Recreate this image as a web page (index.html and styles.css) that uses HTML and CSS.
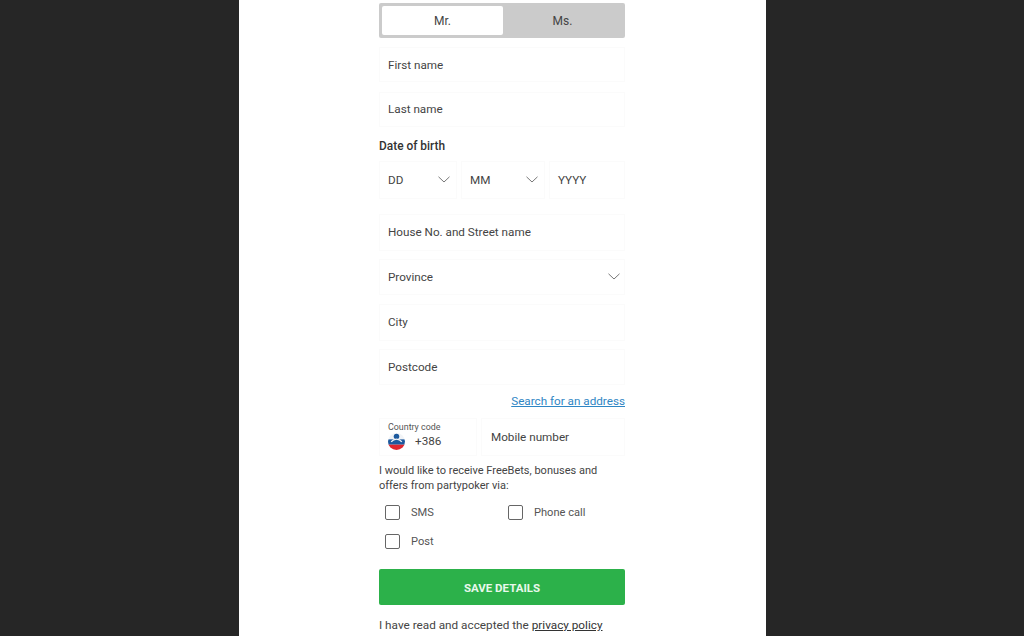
FILE: index.html
```html
<!DOCTYPE html>
<html lang="en">
<head>
  <meta charset="UTF-8" />
  <title>Personal details</title>
  <link rel="stylesheet" href="styles.css">
</head>
<body>
  <div class="panel">
    <form class="form">
      <div class="toggle">
        <div class="toggle-item selected">Mr.</div>
        <div class="toggle-item">Ms.</div>
      </div>

      <div class="field first">First name</div>
      <div class="field last">Last name</div>

      <div class="dob-label">Date of birth</div>
      <div class="dob">
        <div class="field dd">DD
          <svg class="chevron" viewBox="0 0 12 7"><path d="M.5.8 6 6 11.5.8" /></svg>
        </div>
        <div class="field mm">MM
          <svg class="chevron" viewBox="0 0 12 7"><path d="M.5.8 6 6 11.5.8" /></svg>
        </div>
        <div class="field yyyy">YYYY</div>
      </div>

      <div class="field street">House No. and Street name</div>
      <div class="field province">Province
        <svg class="chevron" viewBox="0 0 12 7"><path d="M.5.8 6 6 11.5.8" /></svg>
      </div>
      <div class="field city">City</div>
      <div class="field postcode">Postcode</div>

      <div class="search-row"><a href="#">Search for an address</a></div>

      <div class="phone">
        <div class="field country">
          <span class="country-label">Country code</span>
          <div class="country-value">
            <svg class="flag" viewBox="0 0 16 16">
              <defs><clipPath id="flagClip"><circle cx="8" cy="8" r="8" /></clipPath></defs>
              <g clip-path="url(#flagClip)">
                <rect width="16" height="7" fill="#f2f4f7" />
                <rect y="6" width="16" height="5" fill="#1d5a9e" />
                <rect y="11" width="16" height="5" fill="#e0262e" />
                <circle cx="8" cy="3.4" r="2.6" fill="#1d5a9e" />
                <path d="M3 8.4c1.6-2 3.4-2.6 5-2.6s3.4.6 5 2.6" fill="none" stroke="#f2f4f7" stroke-width="1.2" />
              </g>
            </svg>
            <span class="dial">+386</span>
          </div>
        </div>
        <div class="field mobile">Mobile number</div>
      </div>

      <p class="offers">I would like to receive FreeBets, bonuses and offers from partypoker via:</p>

      <div class="checks">
        <label class="check"><span class="box"></span>SMS</label>
        <label class="check"><span class="box"></span>Phone call</label>
        <label class="check"><span class="box"></span>Post</label>
      </div>

      <button type="button" class="save">SAVE DETAILS</button>

      <p class="privacy">I have read and accepted the <a href="#">privacy policy</a></p>
    </form>
  </div>
</body>
</html>
```

FILE: styles.css
```css
html, body {
  height: 100%;
}
body {
  margin: 0;
  background-color: #262626;
  font-family: Roboto, "Liberation Sans", sans-serif;
  color: #3b3b3b;
  overflow: hidden;
}
.panel {
  width: 527px;
  height: 636px;
  margin-left: 239px;
  background: white;
  overflow: hidden;
}
.form {
  width: 246px;
  margin-left: 140px;
  padding-top: 3px;
}
.toggle {
  display: flex;
  height: 35px;
  padding: 3px;
  box-sizing: border-box;
  background: #cbcbcb;
  border-radius: 2px;
}
.toggle-item {
  flex: 1;
  display: flex;
  align-items: center;
  justify-content: center;
  font-size: 12px;
  color: #444;
}
.toggle-item.selected {
  flex: 0 0 121px;
  background: white;
  border-radius: 2px;
}
.field {
  display: flex;
  align-items: center;
  box-sizing: border-box;
  padding-left: 8px;
  border: 1px solid #fbfbfb;
  font-size: 11.7px;
  color: #444;
  position: relative;
}
.first { height: 35px; margin-top: 9px; }
.last { height: 35px; margin-top: 10px; padding-bottom: 1px; }
.dob-label {
  margin-top: 11px;
  height: 16px;
  line-height: 16px;
  font-size: 11.9px;
  font-weight: 500;
  color: #333;
}
.dob {
  display: flex;
  gap: 4px;
  margin-top: 7px;
}
.dob .field { height: 38px; }
.dd { width: 78px; }
.mm { width: 84px; }
.yyyy { flex: 1; }
.chevron {
  position: absolute;
  right: 6px;
  top: 50%;
  width: 12px;
  height: 7px;
  margin-top: -4px;
  fill: none;
  stroke: #777;
  stroke-width: 1;
}
.province .chevron { right: 4px; }
.street { height: 37px; margin-top: 15px; padding-bottom: 1px; }
.province { height: 36px; margin-top: 8px; }
.city { height: 37px; margin-top: 9px; padding-bottom: 1px; }
.postcode { height: 36px; margin-top: 8px; padding-bottom: 1px; }
.search-row {
  margin-top: 9px;
  height: 15px;
  line-height: 15px;
  text-align: right;
  font-size: 11.7px;
}
.search-row a {
  color: #2f86c4;
}
.phone {
  display: flex;
  gap: 4px;
  margin-top: 9px;
}
.phone .field { height: 38px; }
.country {
  width: 98px;
  flex-direction: column;
  align-items: flex-start;
  padding-top: 3px;
}
.country-label {
  font-size: 8.9px;
  line-height: 11px;
  color: #555;
}
.country-value {
  display: flex;
  align-items: center;
  gap: 10px;
  height: 17px;
  font-size: 11.7px;
}
.dial {
  margin-bottom: 2px;
}
.flag {
  width: 17px;
  height: 17px;
}
.mobile {
  flex: 1;
  padding-left: 9px;
}
.offers {
  margin: 7px 0 0;
  font-size: 11px;
  line-height: 15px;
  color: #444;
}
.checks {
  display: grid;
  grid-template-columns: 123px 1fr;
  row-gap: 13px;
  margin-top: 11px;
  padding-left: 6px;
}
.check {
  display: flex;
  align-items: center;
  gap: 11px;
  height: 16px;
  font-size: 11.1px;
  color: #555;
}
.box {
  width: 13px;
  height: 13px;
  border: 1.5px solid #666;
  border-radius: 2px;
}
.save {
  display: block;
  width: 100%;
  height: 36px;
  margin-top: 20px;
  padding-top: 2px;
  border: none;
  border-radius: 2px;
  background-color: #2cb14a;
  color: #e9f8ec;
  font-family: inherit;
  font-size: 11.5px;
  font-weight: 700;
}
.privacy {
  margin: 13px 0 0;
  font-size: 11.75px;
  line-height: 15px;
  color: #444;
}
.privacy a {
  color: #333;
}
```
